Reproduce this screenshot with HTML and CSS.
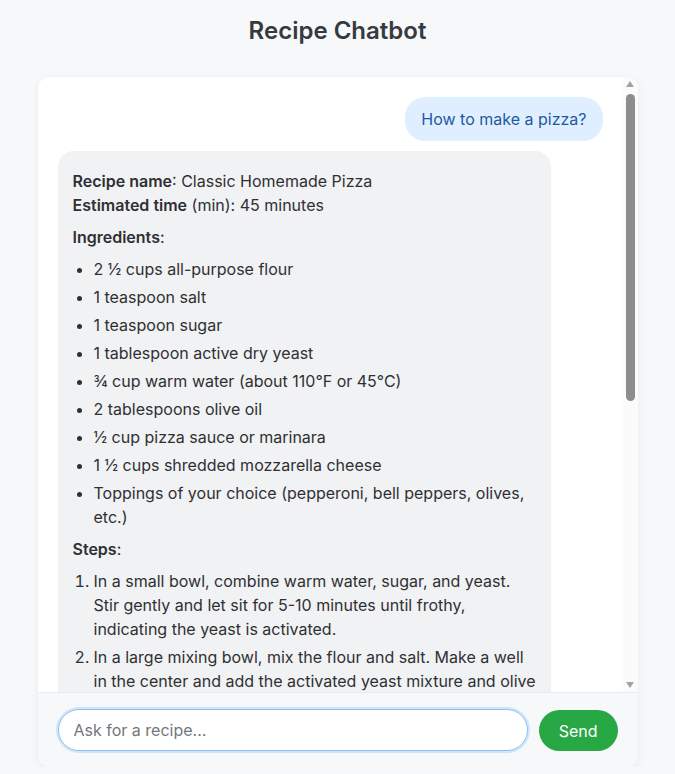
FILE: index.html
```html
<!DOCTYPE html>
<html lang="en">
<head>
<meta charset="utf-8">
<title>Recipe Chatbot</title>
<link rel="stylesheet" href="styles.css">
</head>
<body>
<h1 class="title">Recipe Chatbot</h1>
<div class="chat">
  <div class="viewport">
    <div class="messages">
      <div class="msg user">How to make a pizza?</div>
      <div class="msg bot">
        <p><strong>Recipe name</strong>: Classic Homemade Pizza<br><strong>Estimated time</strong> (min): 45 minutes</p>
        <p><strong>Ingredients</strong>:</p>
        <ul>
          <li>2 ½ cups all-purpose flour</li>
          <li>1 teaspoon salt</li>
          <li>1 teaspoon sugar</li>
          <li>1 tablespoon active dry yeast</li>
          <li>¾ cup warm water (about 110°F or 45°C)</li>
          <li>2 tablespoons olive oil</li>
          <li>½ cup pizza sauce or marinara</li>
          <li>1 ½ cups shredded mozzarella cheese</li>
          <li>Toppings of your choice (pepperoni, bell peppers, olives, etc.)</li>
        </ul>
        <p><strong>Steps</strong>:</p>
        <ol>
          <li>In a small bowl, combine warm water, sugar, and yeast. Stir gently and let sit for 5-10 minutes until frothy, indicating the yeast is activated.</li>
          <li>In a large mixing bowl, mix the flour and salt. Make a well in the center and add the activated yeast mixture and olive oil. Mix until a dough forms.</li>
          <li>Knead the dough on a floured surface for about 5-7 minutes until smooth and elastic.</li>
          <li>Place the dough in a greased bowl, cover with a damp cloth, and let it rise for about 20 minutes.</li>
          <li>Preheat your oven to 475°F (245°C).</li>
          <li>Roll out the dough on a floured surface to your desired thickness and transfer it to a baking sheet.</li>
          <li>Spread the pizza sauce evenly, sprinkle the mozzarella cheese, and add your toppings.</li>
          <li>Bake for 12-15 minutes until the crust is golden and the cheese is bubbly.</li>
          <li>Let cool for a few minutes before slicing and serving.</li>
        </ol>
      </div>
    </div>
    <div class="scrollbar" aria-hidden="true">
      <span class="arrow up"></span>
      <span class="thumb"></span>
      <span class="spacer"></span>
      <span class="arrow down"></span>
    </div>
  </div>
  <form class="composer">
    <input class="field" type="text" placeholder="Ask for a recipe..." autofocus>
    <button class="send" type="button">Send</button>
  </form>
</div>
</body>
</html>
```
FILE: styles.css
```css
* { box-sizing: border-box; }
html, body { margin: 0; }
body {
  background: #f7f8fa;
  font-family: Inter, "Noto Sans", sans-serif;
  color: #2f3033;
  padding: 16px 0 0;
}
.title {
  margin: 0 0 32px;
  text-align: center;
  font-size: 24px;
  font-weight: 600;
  line-height: 29px;
  color: #343a40;
}
.chat {
  width: 600px;
  margin: 0 auto;
  background: #fff;
  border-radius: 12px;
  box-shadow: 0 2px 10px rgba(0,0,0,0.06);
  overflow: hidden;
}
.viewport {
  display: flex;
  height: 615px;
}
.messages {
  flex: 1;
  min-width: 0;
  overflow: hidden;
  padding: 20px;
  display: flex;
  flex-direction: column;
  gap: 10px;
}
.scrollbar {
  width: 15px;
  flex: none;
  background: #fbfbfb;
  display: flex;
  flex-direction: column;
  align-items: center;
  padding: 4px 0;
}
.arrow {
  width: 0;
  height: 0;
  border-left: 4.5px solid transparent;
  border-right: 4.5px solid transparent;
}
.arrow.up { border-bottom: 6px solid #a3a3a3; }
.arrow.down { border-top: 6px solid #a3a3a3; }
.thumb {
  width: 9px;
  height: 307px;
  margin-top: 7px;
  border-radius: 5px;
  background: #8d8d8d;
}
.spacer { flex: 1; }
.msg {
  font-size: 16px;
  line-height: 24px;
}
.user {
  align-self: flex-end;
  background: #e0efff;
  color: #1d5aa3;
  padding: 10px 16px;
  border-radius: 20px;
}
.bot {
  align-self: flex-start;
  max-width: 493px;
  background: #f1f2f4;
  padding: 10px 12px 10px 15px;
  border-radius: 16px;
}
.bot p { margin: 8px 0; }
.bot strong { font-weight: 600; }
.bot ul, .bot ol { margin: 8px 0; padding-left: 21px; }
.bot li { margin: 4px 0; }
.composer {
  display: flex;
  gap: 11px;
  padding: 16px 20px;
  background: #f7f8fa;
  border-top: 1px solid #e9ebee;
  margin: 0;
}
.field {
  flex: 1;
  height: 42px;
  border: 1px solid #8cc0f5;
  border-radius: 21px;
  padding: 0 15px;
  font: 16px Inter, "Noto Sans", sans-serif;
  color: #2f3033;
  background: #fff;
  box-shadow: 0 0 0 2px rgba(100,170,240,0.25);
  outline: none;
}
.field::placeholder { color: #74777c; }
.send {
  height: 41px;
  margin-top: 1px;
  padding: 0 20px;
  border: none;
  border-radius: 21px;
  background: #28a745;
  color: #fff;
  font: 16px Inter, "Noto Sans", sans-serif;
}
```
